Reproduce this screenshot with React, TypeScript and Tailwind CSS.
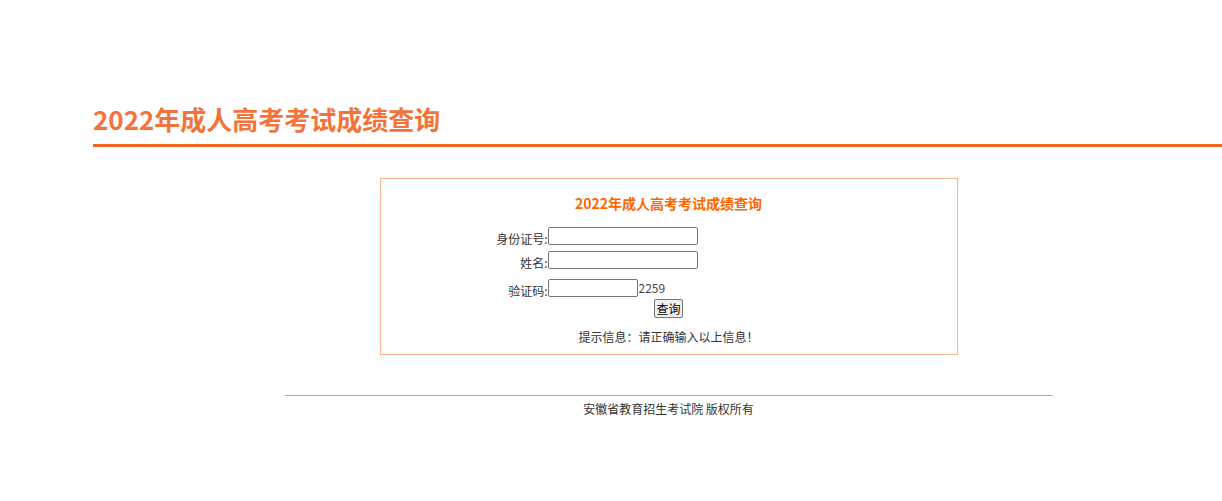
export default function App() {
  return (
    <div className="min-h-[501px] w-full overflow-x-hidden bg-white font-['Noto_Sans_CJK_SC',sans-serif] text-[#333]">
      <div className="ml-[93px] w-[1151px] pt-[99px]">
        {/* page header */}
        <div className="border-b-[3px] border-[#f06422] pb-[5px]">
          <h1 className="text-[26px] font-bold leading-[40px] text-[#f4733a]">
            2022年成人高考考试成绩查询
          </h1>
        </div>

        {/* query box */}
        <div className="mx-auto mt-[31px] w-[578px] border border-[#fbb48e] pt-[13px] pb-[8px]">
          <div className="text-center text-[14px] font-bold leading-[22px] text-[#ff6600]">
            2022年成人高考考试成绩查询
          </div>

          <div className="mt-[13px] flex flex-col text-[12px]">
            <div className="flex h-[18px] items-start">
              <span className="w-[167px] pt-[3px] text-right leading-[18px]">身份证号:</span>
              <input className="h-[18px] w-[150px] rounded-[2px] border border-[#767676] bg-white" />
            </div>
            <div className="mt-[6px] flex h-[18px] items-start">
              <span className="w-[167px] pt-[3px] text-right leading-[18px]">姓名:</span>
              <input className="h-[18px] w-[150px] rounded-[2px] border border-[#767676] bg-white" />
            </div>
            <div className="mt-[10px] flex h-[18px] items-start">
              <span className="w-[167px] pt-[3px] text-right leading-[18px]">验证码:</span>
              <input className="h-[18px] w-[90px] rounded-[2px] border border-[#767676] bg-white" />
              <span className="ml-px leading-[18px] text-[#444]">2259</span>
            </div>
            <div className="mt-[2px] flex justify-center">
              <button className="h-[19px] rounded-[2px] border border-[#767676] bg-[#efefef] px-[1px] text-[12px] leading-[16px] text-black">
                查询
              </button>
            </div>
            <div className="mt-[10px] text-center leading-[18px]">
              提示信息：请正确输入以上信息！
            </div>
          </div>
        </div>

        {/* footer */}
        <div className="mx-auto mt-[40px] w-[768px] border-t border-[#f0a070] pt-[4px] text-center text-[12px] leading-[18px]">
          安徽省教育招生考试院 版权所有
        </div>
      </div>
    </div>
  );
}
